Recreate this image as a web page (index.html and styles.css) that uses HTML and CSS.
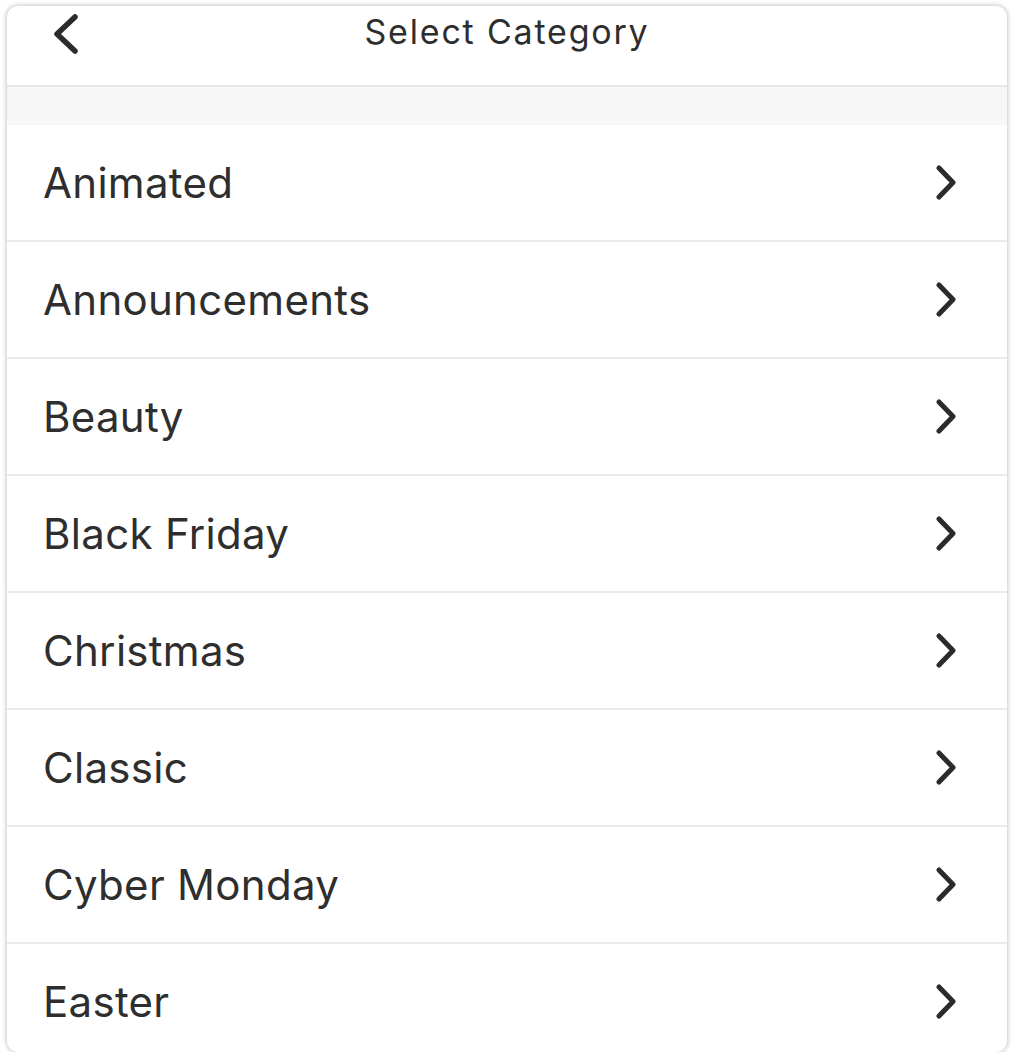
FILE: index.html
```html
<!DOCTYPE html>
<html>
<head>
<meta charset="utf-8">
<link rel="stylesheet" href="styles.css">
</head>
<body>
<div class="card">
  <header class="header">
    <svg class="back" width="30" height="44" viewBox="0 0 30 44"><polyline points="22,4 4,21 22,38" fill="none" stroke="#2b2b2b" stroke-width="5.5" stroke-linecap="round" stroke-linejoin="round"/></svg>
    <h1 class="title">Select Category</h1>
  </header>
  <div class="band"></div>
  <ul class="list">
    <li class="row"><span class="label">Animated</span><svg class="chev" width="24" height="36" viewBox="0 0 24 36"><polyline points="5,3 19,17.5 5,32" fill="none" stroke="#2b2b2b" stroke-width="5" stroke-linecap="round" stroke-linejoin="round"/></svg></li>
    <li class="row"><span class="label">Announcements</span><svg class="chev" width="24" height="36" viewBox="0 0 24 36"><polyline points="5,3 19,17.5 5,32" fill="none" stroke="#2b2b2b" stroke-width="5" stroke-linecap="round" stroke-linejoin="round"/></svg></li>
    <li class="row"><span class="label">Beauty</span><svg class="chev" width="24" height="36" viewBox="0 0 24 36"><polyline points="5,3 19,17.5 5,32" fill="none" stroke="#2b2b2b" stroke-width="5" stroke-linecap="round" stroke-linejoin="round"/></svg></li>
    <li class="row"><span class="label">Black Friday</span><svg class="chev" width="24" height="36" viewBox="0 0 24 36"><polyline points="5,3 19,17.5 5,32" fill="none" stroke="#2b2b2b" stroke-width="5" stroke-linecap="round" stroke-linejoin="round"/></svg></li>
    <li class="row"><span class="label">Christmas</span><svg class="chev" width="24" height="36" viewBox="0 0 24 36"><polyline points="5,3 19,17.5 5,32" fill="none" stroke="#2b2b2b" stroke-width="5" stroke-linecap="round" stroke-linejoin="round"/></svg></li>
    <li class="row"><span class="label">Classic</span><svg class="chev" width="24" height="36" viewBox="0 0 24 36"><polyline points="5,3 19,17.5 5,32" fill="none" stroke="#2b2b2b" stroke-width="5" stroke-linecap="round" stroke-linejoin="round"/></svg></li>
    <li class="row"><span class="label">Cyber Monday</span><svg class="chev" width="24" height="36" viewBox="0 0 24 36"><polyline points="5,3 19,17.5 5,32" fill="none" stroke="#2b2b2b" stroke-width="5" stroke-linecap="round" stroke-linejoin="round"/></svg></li>
    <li class="row last"><span class="label">Easter</span><svg class="chev" width="24" height="36" viewBox="0 0 24 36"><polyline points="5,3 19,17.5 5,32" fill="none" stroke="#2b2b2b" stroke-width="5" stroke-linecap="round" stroke-linejoin="round"/></svg></li>
  </ul>
</div>
</body>
</html>
```
FILE: styles.css
```css
html, body {
  margin: 0;
  padding: 0;
  background: #ffffff;
}
body {
  font-family: Inter, Roboto, "Liberation Sans", sans-serif;
  color: #2e2e2e;
}
.card {
  margin: 6px 8px 0 7px;
  width: 1000px;
  height: 1046px;
  border-radius: 11px;
  box-shadow: 0 0 4px 1px rgba(0, 0, 0, 0.22);
  overflow: hidden;
  background: #ffffff;
  display: flex;
  flex-direction: column;
}
.header {
  height: 79px;
  flex: none;
  border-bottom: 2px solid #e6e6e6;
  display: flex;
  justify-content: center;
  align-items: flex-start;
  position: relative;
}
.back {
  position: absolute;
  left: 46px;
  top: 7px;
}
.title {
  margin: 0;
  padding-top: 6px;
  font-size: 34px;
  font-weight: 400;
  line-height: 40px;
  letter-spacing: 1.8px;
  color: #2e2e2e;
}
.band {
  height: 38px;
  flex: none;
  background: #f7f7f7;
}
.list {
  list-style: none;
  margin: 0;
  padding: 0;
}
.row {
  height: 115px;
  border-bottom: 2px solid #e9e9e9;
  display: flex;
  align-items: center;
  justify-content: space-between;
  padding: 0 49px 0 36px;
}
.row.last {
  border-bottom: none;
}
.label {
  font-size: 42px;
  line-height: 50px;
  letter-spacing: 0.3px;
}
.chev {
  display: block;
}
```
